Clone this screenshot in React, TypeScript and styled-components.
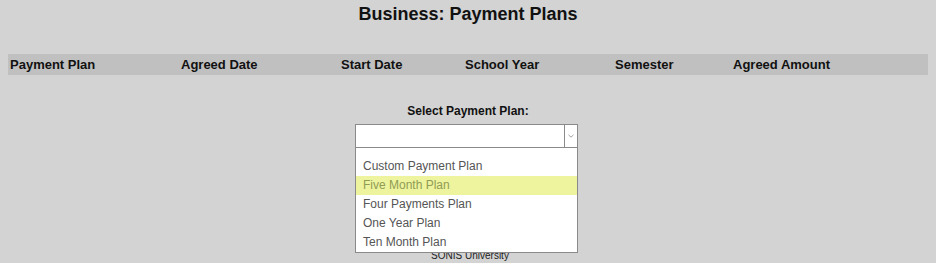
import React from 'react'
import styled, { createGlobalStyle } from 'styled-components'

const GlobalStyle = createGlobalStyle`
  html, body {
    margin: 0;
    padding: 0;
    background: #d3d3d3;
    font-family: "Liberation Sans", Arial, sans-serif;
    color: #111;
  }
`

const Page = styled.div`
  padding: 0 8px;
  height: 263px;
  box-sizing: border-box;
`

const Title = styled.h1`
  margin: 0;
  padding-top: 3px;
  font-size: 18px;
  line-height: 22px;
  font-weight: bold;
  text-align: center;
  color: #111;
`

const HeaderBar = styled.div`
  margin-top: 29px;
  height: 21px;
  background: #c0c0c0;
  display: grid;
  grid-template-columns: 171px 160px 124px 150px 118px 1fr;
  align-items: center;
  padding-left: 2px;
`

const HeaderCell = styled.div`
  font-size: 13px;
  font-weight: bold;
  color: #111;
  white-space: nowrap;
`

const PickerArea = styled.div`
  margin-top: 28px;
  display: flex;
  flex-direction: column;
  align-items: center;
  height: 147px;
`

const Label = styled.div`
  font-size: 12px;
  line-height: 16px;
  font-weight: bold;
  color: #111;
`

const SelectWrap = styled.div`
  position: relative;
  margin-top: 5px;
  margin-right: 3px;
  width: 223px;
`

const SelectBox = styled.div`
  height: 24px;
  box-sizing: border-box;
  border: 1px solid #8a8a8a;
  background: #fff;
  display: flex;
  justify-content: flex-end;
`

const ArrowButton = styled.div`
  width: 12px;
  border-left: 1px solid #8a8a8a;
  display: flex;
  align-items: center;
  justify-content: center;
`

const OptionList = styled.ul`
  position: absolute;
  top: 24px;
  left: 0;
  width: 223px;
  box-sizing: border-box;
  margin: 0;
  padding: 0;
  list-style: none;
  background: #fff;
  border: 1px solid #8a8a8a;
  border-top: none;
`

const Option = styled.li<{ $active?: boolean; $empty?: boolean }>`
  height: ${(p) => (p.$empty ? '9px' : '19px')};
  line-height: 19px;
  padding-left: 7px;
  font-size: 12px;
  color: ${(p) => (p.$active ? '#8f9c55' : '#555')};
  background: ${(p) => (p.$active ? '#eef39d' : '#fff')};
  white-space: nowrap;
`

const Footer = styled.div`
  text-align: center;
  font-size: 10px;
  line-height: 12px;
  color: #222;
  margin-left: 4px;
`

const columns = ['Payment Plan', 'Agreed Date', 'Start Date', 'School Year', 'Semester', 'Agreed Amount']
const plans = ['Custom Payment Plan', 'Five Month Plan', 'Four Payments Plan', 'One Year Plan', 'Ten Month Plan']

export default function App() {
  const [active] = React.useState('Five Month Plan')

  return (
    <Page>
      <GlobalStyle />
      <Title>Business: Payment Plans</Title>
      <HeaderBar>
        {columns.map((c) => (
          <HeaderCell key={c}>{c}</HeaderCell>
        ))}
      </HeaderBar>
      <PickerArea>
        <Label>Select Payment Plan:</Label>
        <SelectWrap>
          <SelectBox>
            <ArrowButton>
              <svg width="6" height="4" viewBox="0 0 6 4">
                <path d="M0.5 0.8 L3 3.2 L5.5 0.8" fill="none" stroke="#a0a0a0" strokeWidth="1" />
              </svg>
            </ArrowButton>
          </SelectBox>
          <OptionList>
            <Option $empty />
            {plans.map((p) => (
              <Option key={p} $active={p === active}>
                {p}
              </Option>
            ))}
          </OptionList>
        </SelectWrap>
      </PickerArea>
      <Footer>SONIS University</Footer>
    </Page>
  )
}
